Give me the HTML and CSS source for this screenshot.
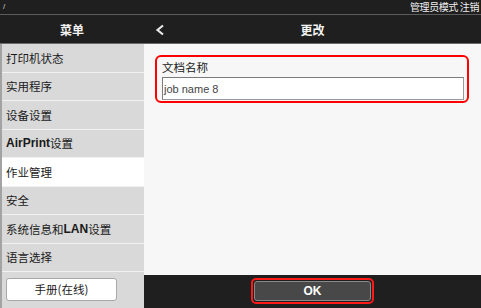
FILE: index.html
```html
<!DOCTYPE html>
<html lang="zh-CN">
<head>
<meta charset="utf-8">
<title>更改</title>
<link rel="stylesheet" href="styles.css">
</head>
<body>
<div class="screen">
  <div class="topbar">
    <span class="status">/</span>
    <span class="admin">管理员模式&nbsp;注销</span>
  </div>
  <div class="header">
    <div class="menu-title">菜单</div>
    <div class="page-title">
      <span class="back">
        <svg width="10" height="12" viewBox="0 0 10 12"><path d="M8 1.5 L2.5 6 L8 10.5" fill="none" stroke="#e8e8e8" stroke-width="2.2"/></svg>
      </span>
      <span class="title-text">更改</span>
    </div>
  </div>
  <div class="body">
    <nav class="sidebar">
      <ul class="menu">
        <li class="item">打印机状态</li>
        <li class="item">实用程序</li>
        <li class="item">设备设置</li>
        <li class="item"><b>AirPrint</b>设置</li>
        <li class="item active">作业管理</li>
        <li class="item">安全</li>
        <li class="item">系统信息和<b>LAN</b>设置</li>
        <li class="item">语言选择</li>
      </ul>
      <div class="manual">
        <button class="manual-btn">手册(在线)</button>
      </div>
    </nav>
    <main class="content">
      <div class="panel">
        <div class="field">
          <div class="label">文档名称</div>
          <div class="input">job name 8</div>
        </div>
      </div>
      <div class="footer">
        <div class="ok-ring"><button class="ok">OK</button></div>
      </div>
    </main>
  </div>
</div>
</body>
</html>
```

FILE: styles.css
```css
* { box-sizing: border-box; }
html, body { margin: 0; padding: 0; }
body {
  width: 481px;
  height: 308px;
  overflow: hidden;
  background: #1f1f1f;
  font-family: "Noto Sans CJK SC", "Liberation Sans", sans-serif;
}
.screen {
  display: flex;
  flex-direction: column;
  width: 481px;
  height: 308px;
}
.topbar {
  height: 15px;
  flex: none;
  background: #1f1f1f;
  border-bottom: 1px solid #5c5c5c;
  display: flex;
  align-items: center;
  justify-content: space-between;
  padding: 0 2px 0 3px;
  color: #f0f0f0;
}
.status { font-size: 8px; line-height: 1; color: #cfcfcf; font-family: "Liberation Sans", sans-serif; }
.admin { font-size: 10px; line-height: 1; letter-spacing: -0.4px; }
.header {
  height: 29px;
  flex: none;
  background: #1f1f1f;
  border-bottom: 1px solid #6a6a6a;
  display: flex;
  color: #f2f2f2;
  font-weight: 700;
  font-size: 12px;
}
.menu-title {
  width: 144px;
  display: flex;
  align-items: center;
  justify-content: center;
}
.page-title {
  flex: 1;
  position: relative;
  display: flex;
  align-items: center;
  justify-content: center;
}
.back {
  position: absolute;
  left: 11px;
  top: 9px;
  display: flex;
}
.body {
  flex: 1;
  display: flex;
  min-height: 0;
}
.sidebar {
  width: 144px;
  flex: none;
  background: #d9d9d9;
  border-left: 2px solid #a3a3a3;
  display: flex;
  flex-direction: column;
}
.menu {
  list-style: none;
  margin: 0;
  padding: 0;
}
.item {
  height: 28.5px;
  border-bottom: 1px solid #f1f1f1;
  display: flex;
  align-items: center;
  padding-left: 4px;
  font-size: 11.5px;
  color: #1a1a1a;
  font-weight: 400;
}
.item b { font-family: "Liberation Sans", sans-serif; font-weight: 700; font-size: 12px; }
.item.active { background: #ffffff; }
.manual {
  flex: 1;
  display: flex;
  align-items: center;
  padding-left: 4px;
  padding-bottom: 2px;
}
.manual-btn {
  width: 111px;
  height: 23px;
  background: #ffffff;
  border: 1px solid #a8a8a8;
  border-radius: 3px;
  font-family: "Noto Sans CJK SC", "Liberation Sans", sans-serif;
  font-size: 11.5px;
  font-weight: 400;
  color: #1a1a1a;
  padding: 0;
}
.content {
  flex: 1;
  display: flex;
  flex-direction: column;
}
.panel {
  flex: 1;
  background: #f7f7f7;
  padding: 11px 0 0 11px;
}
.field {
  width: 314px;
  height: 48px;
  border: 2px solid #ff0000;
  border-radius: 6px;
  padding: 2px 3px 0 5px;
  display: flex;
  flex-direction: column;
}
.label {
  font-size: 11.5px;
  font-weight: 400;
  color: #1a1a1a;
  line-height: 16px;
  height: 18px;
}
.input {
  height: 23px;
  background: #ffffff;
  border: 1px solid #7c7c7c;
  border-right-color: #9a9a9a;
  border-bottom-color: #9a9a9a;
  font-family: "Liberation Sans", sans-serif;
  font-size: 11px;
  color: #444;
  display: flex;
  align-items: center;
  padding-left: 1px;
}
.footer {
  height: 33px;
  flex: none;
  background: #1f1f1f;
  display: flex;
  align-items: center;
  justify-content: center;
  padding-bottom: 1px;
}
.ok-ring {
  width: 123px;
  height: 26px;
  border: 2px solid #ff1a1a;
  border-radius: 5px;
  padding: 1px;
  display: flex;
}
.ok {
  flex: 1;
  background: #484848;
  border: 1px solid #8a8a8a;
  border-radius: 3px;
  color: #ffffff;
  font-family: "Liberation Sans", sans-serif;
  font-weight: 700;
  font-size: 12px;
  padding: 0;
}
```
